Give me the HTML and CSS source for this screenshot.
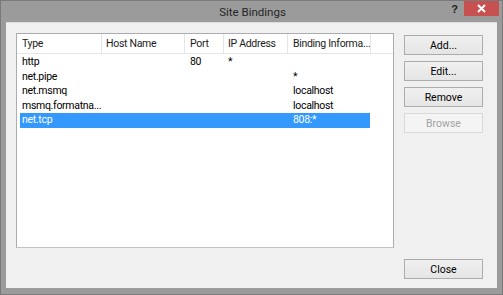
FILE: index.html
```html
<!DOCTYPE html>
<html>
<head>
<meta charset="utf-8">
<link rel="stylesheet" href="styles.css">
</head>
<body>
<div class="window">
  <div class="titlebar">
    <div class="tb-side"></div>
    <div class="title">Site Bindings</div>
    <div class="tb-side tb-controls">
      <span class="help">?</span>
      <span class="close">
        <svg width="9" height="9" viewBox="0 0 9 9"><path d="M1 1 L8 8 M8 1 L1 8" stroke="#fff" stroke-width="2"/></svg>
      </span>
    </div>
  </div>
  <div class="client">
    <div class="list">
      <div class="row header">
        <div class="c c1">Type</div>
        <div class="c c2">Host Name</div>
        <div class="c c3">Port</div>
        <div class="c c4">IP Address</div>
        <div class="c c5">Binding Informa...</div>
        <div class="c c6"></div>
      </div>
      <div class="row">
        <div class="c c1">http</div><div class="c c2"></div><div class="c c3">80</div><div class="c c4">*</div><div class="c c5"></div>
      </div>
      <div class="row">
        <div class="c c1">net.pipe</div><div class="c c2"></div><div class="c c3"></div><div class="c c4"></div><div class="c c5">*</div>
      </div>
      <div class="row">
        <div class="c c1">net.msmq</div><div class="c c2"></div><div class="c c3"></div><div class="c c4"></div><div class="c c5">localhost</div>
      </div>
      <div class="row">
        <div class="c c1">msmq.formatna...</div><div class="c c2"></div><div class="c c3"></div><div class="c c4"></div><div class="c c5">localhost</div>
      </div>
      <div class="row selected">
        <div class="c c1">net.tcp</div><div class="c c2"></div><div class="c c3"></div><div class="c c4"></div><div class="c c5">808:*</div>
      </div>
    </div>
    <div class="buttons">
      <button class="btn">Add...</button>
      <button class="btn">Edit...</button>
      <button class="btn">Remove</button>
      <button class="btn disabled">Browse</button>
      <button class="btn close-btn">Close</button>
    </div>
  </div>
</div>
</body>
</html>
```
FILE: styles.css
```css
html, body {
  margin: 0;
  padding: 0;
}
body {
  font-family: Roboto, "Liberation Sans", sans-serif;
  font-size: 10.5px;
  color: #000;
}
.window {
  width: 503px;
  height: 295px;
  box-sizing: border-box;
  background: #9b9b9b;
  border: 1px solid #7a7a7a;
  display: flex;
  flex-direction: column;
}
.titlebar {
  height: 21px;
  display: grid;
  grid-template-columns: 1fr auto 1fr;
  align-items: start;
}
.title {
  font-size: 11.5px;
  color: #262626;
  line-height: 23px;
  padding-left: 2px;
}
.tb-controls {
  display: flex;
  justify-content: flex-end;
  align-items: flex-start;
  padding-right: 3px;
}
.help {
  font-family: "Liberation Sans", sans-serif;
  font-weight: bold;
  font-size: 11px;
  color: #222;
  line-height: 14px;
  margin-top: 1px;
  margin-right: 6px;
}
.close {
  width: 35px;
  height: 15px;
  background: #c75050;
  display: flex;
  align-items: center;
  justify-content: center;
}
.client {
  flex: 1;
  margin: 0 5px 6px 5px;
  background: #f0f0f0;
  border-top: 1px solid #dcdcdc;
  display: flex;
  padding: 10px 11px 9px 10px;
  gap: 10px;
}
.list {
  width: 378px;
  height: 215px;
  box-sizing: border-box;
  background: #fff;
  border: 1px solid #abadb3;
  border-bottom-color: #c0c2c8;
  padding: 0 3px;
  display: flex;
  flex-direction: column;
  letter-spacing: -0.3px;
}
.row {
  display: flex;
  height: 14.5px;
  line-height: 14.5px;
  white-space: nowrap;
  flex-shrink: 0;
}
.row.header {
  height: 19px;
  line-height: 19px;
  border-bottom: 1px solid #e5e5e5;
  margin: 0 -3px;
  padding: 0 3px;
  color: #1c1c1c;
}
.row.header + .row {
  margin-top: 1px;
}
.c {
  box-sizing: border-box;
}
.c1 { width: 81px; padding-left: 2px; }
.c2 { width: 83px; padding-left: 5px; }
.c3 { width: 39px; padding-left: 6px; }
.c4 { width: 64px; padding-left: 5px; }
.c5 { width: 83px; padding-left: 6px; }
.header .c2, .header .c3, .header .c4, .header .c5, .header .c6 {
  border-left: 1px solid #e5e5e5;
}
.header .c2 { padding-left: 4px; }
.header .c3 { padding-left: 5px; }
.header .c4 { padding-left: 4px; }
.header .c5 { padding-left: 5px; }
.c6 { width: 1px; }
.row.selected {
  background: #3399ff;
  color: #fff;
  width: 350px;
}
.buttons {
  display: flex;
  flex-direction: column;
  gap: 6px;
  padding-top: 2px;
}
.btn {
  width: 79px;
  height: 20px;
  box-sizing: border-box;
  border: 1px solid #acacac;
  background: linear-gradient(#f0f0f0, #e5e5e5);
  font-family: Roboto, "Liberation Sans", sans-serif;
  font-size: 10.5px;
  color: #000;
  padding: 0;
  line-height: 17px;
}
.btn.disabled {
  color: #a3a3a3;
  border-color: #d9d9d9;
  background: #f4f4f4;
}
.close-btn {
  margin-top: auto;
}
```
